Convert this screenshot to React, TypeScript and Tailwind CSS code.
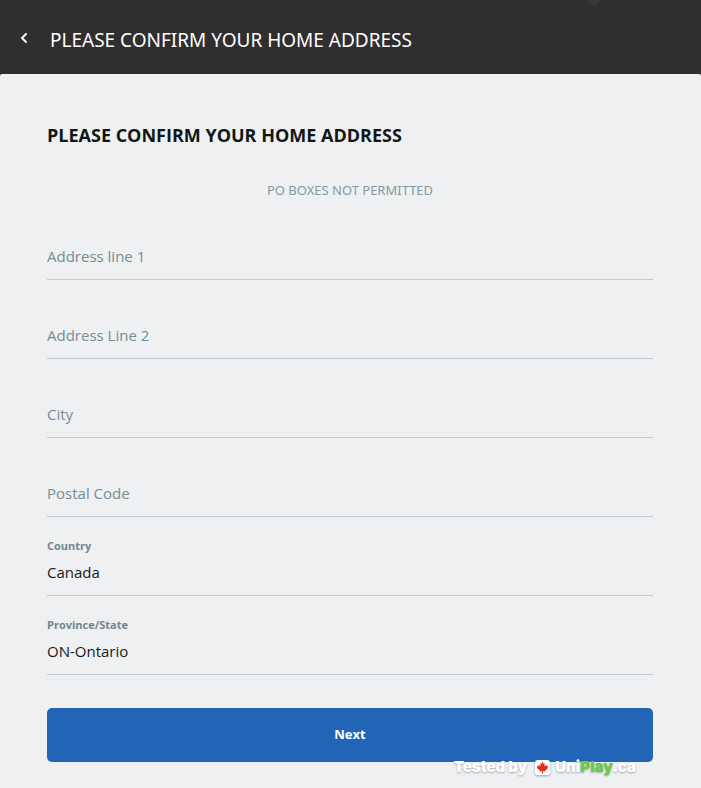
import { useState } from "react";

const textFields = [
  { id: "address1", label: "Address line 1" },
  { id: "address2", label: "Address Line 2" },
  { id: "city", label: "City" },
  { id: "postal", label: "Postal Code" },
];

const selectFields = [
  { id: "country", label: "Country", value: "Canada" },
  { id: "province", label: "Province/State", value: "ON-Ontario" },
];

const rowClass =
  "flex h-[79px] flex-col justify-end border-b border-[#c3c9cc] pb-[11px]";

function TextField({ id, label }: { id: string; label: string }) {
  const [value, setValue] = useState("");
  return (
    <div className={rowClass}>
      <input
        id={id}
        aria-label={label}
        placeholder={label}
        value={value}
        onChange={(e) => setValue(e.target.value)}
        className="h-6 w-full bg-transparent text-[15px] leading-6 text-[#111] outline-none placeholder:text-[#758d93] placeholder:opacity-100"
      />
    </div>
  );
}

function SelectField({ id, label, value }: { id: string; label: string; value: string }) {
  return (
    <div className={rowClass}>
      <label htmlFor={id} className="mb-[6px] text-[11px] leading-4 font-bold text-[#6f878e]">
        {label}
      </label>
      <select
        id={id}
        defaultValue={value}
        className="h-6 w-full appearance-none bg-transparent text-[15px] leading-6 text-[#16191a] outline-none"
      >
        <option value={value}>{value}</option>
      </select>
    </div>
  );
}

function Watermark() {
  return (
    <div className="pointer-events-none absolute right-[65px] bottom-3 flex items-center font-['Inter','Liberation_Sans',sans-serif] text-[15px] leading-[18px] font-black whitespace-nowrap text-white [text-shadow:0_1px_2px_rgba(70,80,90,0.45)]">
      <span>Tested by</span>
      <svg viewBox="0 0 16 16" className="mr-[5px] ml-2 size-[15px] drop-shadow-[0_1px_1px_rgba(70,80,90,0.5)]">
        <rect width="16" height="16" rx="3" fill="#fff" />
        <path
          d="M8 1.600 9.200 4.200 10.500 3.500 10 7 11.800 5.300 12.200 6.400 14 6.200 13.300 8 14 8.600 10.800 11.200 11.100 12.200 8.400 11.900 8.500 14.600H7.500L7.600 11.900 4.900 12.200 5.200 11.200 2 8.600 2.700 8 2 6.200 3.800 6.400 4.200 5.300 6 7 5.500 3.500 6.800 4.200Z"
          fill="#e02b24"
        />
      </svg>
      <span>
        Uni<span className="text-[#68cb45]">Play</span>.ca
      </span>
    </div>
  );
}

export default function App() {
  return (
    <div className="relative min-h-screen bg-[#312e2f] font-['Open_Sans','Noto_Sans',sans-serif]">
      <header className="flex h-[74px] items-center overflow-hidden px-[18px] pt-[6px]">
        <button type="button" aria-label="Back" className="flex h-8 w-8 items-center pb-[4px]">
          <svg viewBox="0 0 12 12" className="size-3" fill="none" stroke="#fff" strokeWidth="2">
            <path d="M8.600 1.400 4 6l4.600 4.600" />
          </svg>
        </button>
        <h1 className="font-['Noto_Sans',sans-serif] text-[19px] leading-7 text-white">
          PLEASE CONFIRM YOUR HOME ADDRESS
        </h1>
      </header>
      <svg viewBox="0 0 14 6" className="absolute top-0 left-[587px] h-[6px] w-[14px]">
        <circle cx="7" cy="-1.500" r="4" fill="#383537" stroke="#3b383a" strokeWidth="4" />
      </svg>
      <main className="min-h-[calc(100vh-74px)] rounded-t-[2px] bg-[#eef0f1] pt-12 pr-12 pb-[26px] pl-[47px]">
        <form onSubmit={(e) => e.preventDefault()}>
          <h2 className="text-[18px] leading-[26px] font-bold text-[#111617]">
            PLEASE CONFIRM YOUR HOME ADDRESS
          </h2>
          <p className="mt-[31px] text-center font-['Noto_Sans',sans-serif] text-[13px] leading-[22px] text-[#839aa1]">
            PO BOXES NOT PERMITTED
          </p>
          {textFields.map((f) => (
            <TextField key={f.id} {...f} />
          ))}
          {selectFields.map((f) => (
            <SelectField key={f.id} {...f} />
          ))}
          <button
            type="submit"
            className="mt-[33px] h-[54px] w-full rounded-[5px] bg-[#2265b6] text-[13px] font-bold text-white"
          >
            Next
          </button>
        </form>
      </main>
      <Watermark />
    </div>
  );
}
